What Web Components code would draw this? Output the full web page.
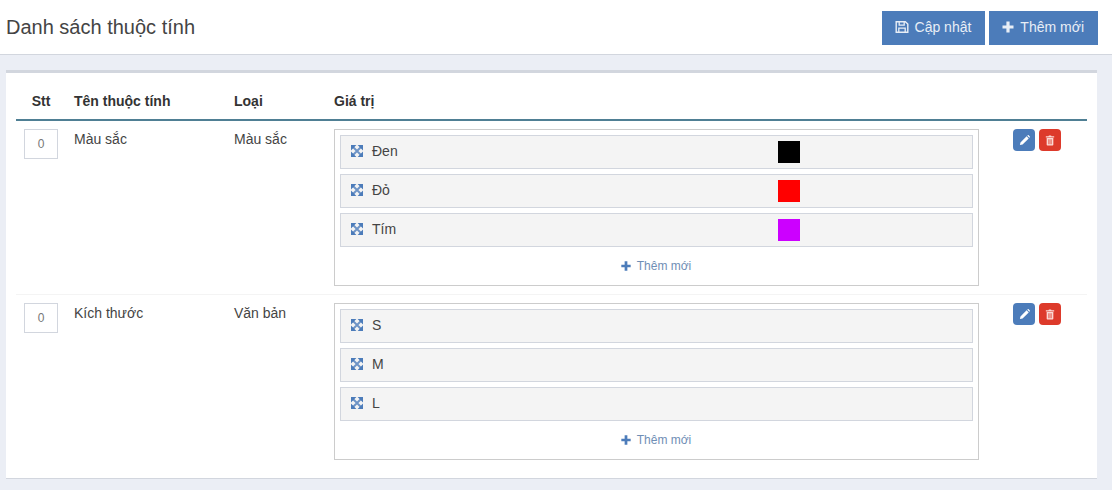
<!DOCTYPE html>
<html lang="vi"><head><meta charset="utf-8"><title>Danh sách thuộc tính</title>
<style>
html,body{margin:0;padding:0;height:490px;overflow:hidden;background:#ebeef5;font:14px/20px "Liberation Sans",Arial,sans-serif;color:#333}
</style></head><body>
<page-header title-text="Danh sách thuộc tính">
  <ui-button icon="save">Cập nhật</ui-button>
  <ui-button icon="plus">Thêm mới</ui-button>
</page-header>
<attr-panel>
  <attr-row name="Màu sắc" kind="Màu sắc">
    <value-item label="Đen" swatch="#000000"></value-item>
    <value-item label="Đỏ" swatch="#ff0000"></value-item>
    <value-item label="Tím" swatch="#cc00ff"></value-item>
  </attr-row>
  <attr-row name="Kích thước" kind="Văn bản">
    <value-item label="S"></value-item>
    <value-item label="M"></value-item>
    <value-item label="L"></value-item>
  </attr-row>
</attr-panel>
<script>
const ICONS={
 save:'<svg viewBox="0 0 14 14" width="14" height="14"><path fill="none" stroke="currentColor" stroke-width="1.4" d="M1.200 1.700h9.100l2.500 2.300v8.300H1.200z"/><path fill="none" stroke="currentColor" stroke-width="1.3" d="M4.200 2v3.200h5V2M3.800 12V8.200h6.400V12"/></svg>',
 plus:'<svg viewBox="0 0 12 12" width="12" height="12"><path fill="currentColor" d="M4.400 0.500h3.200v3.900h3.900v3.200H7.600v3.900H4.400V7.600H0.500V4.400h3.900z"/></svg>',
 move:'<svg viewBox="0 0 12 12" width="12" height="12"><path fill="currentColor" d="M0 0h5.400L0 5.400zM12 0v5.400L6.600 0zM12 12H6.600L12 6.600zM0 12V6.600L5.400 12z"/><path fill="none" stroke="currentColor" stroke-width="2" stroke-opacity=".8" d="M2 2l8 8M10 2l-8 8"/></svg>',
 pencil:'<svg viewBox="0 0 12 12" width="11" height="11"><path fill="currentColor" d="M8.300 1.400l2.300 2.300-6.700 6.700L1 11l.6-2.900zM9 .7l.6-.5c.3-.2.6-.2.9 0l1.300 1.300c.2.3.2.6 0 .9l-.5.6z"/></svg>',
 trash:'<svg viewBox="0 0 12 12" width="10" height="11"><path fill="currentColor" fill-rule="evenodd" d="M4.200 1l.5-1h2.600l.5 1H11v1.300H1V1zM2 3h8v7.800c0 .7-.5 1.200-1.200 1.200H3.200C2.500 12 2 11.500 2 10.800zM4.200 4.500v6h1.100v-6zM6.700 4.500v6h1.100v-6z"/></svg>'
};
function def(name,css,html){
  customElements.define(name,class extends HTMLElement{
    connectedCallback(){
      if(this.shadowRoot)return;
      const r=this.attachShadow({mode:'open'});
      r.innerHTML='<style>'+css+'</style>'+html(this);
    }
  });
}
def('ui-icon',':host{display:inline-flex;align-items:center;justify-content:center;line-height:0}',
  e=>ICONS[e.getAttribute('name')]);
def('ui-button',`:host{display:inline-flex;align-items:center;height:34px;padding:0 13px 2px 12px;background:#4c7cba;color:#e8eef6;border:1px solid #4c7cba;box-sizing:border-box;font-size:14px;gap:6px;cursor:pointer}`,
  e=>`<ui-icon name="${e.getAttribute('icon')}"></ui-icon><slot></slot>`);
def('page-header',`:host{display:flex;align-items:center;justify-content:space-between;height:55px;box-sizing:border-box;background:#fff;border-bottom:1px solid #d2d6de;padding:0 14px 0 6px}
  h1{margin:0;font-size:20px;font-weight:400;line-height:24px;color:#444}
  .a{display:flex;gap:4px;margin-top:1px}`,
  e=>`<h1>${e.getAttribute('title-text')}</h1><div class="a"><slot></slot></div>`);
def('attr-panel',`:host{display:block;margin:15px 15px 0 6px;background:#fff;border-top:3px solid #d2d6de;border-bottom:1px solid #d2d6de;padding:0 10px;height:405px;box-sizing:content-box}
  .h{display:grid;grid-template-columns:50px 160px 100px 1fr;height:36px;padding-top:10px;border-bottom:2px solid #4f7f94;font-weight:700;align-items:center}
  .h span{padding-left:8px}.h span:first-child{padding:0;text-align:center}`,
  ()=>`<div class="h"><span>Stt</span><span>Tên thuộc tính</span><span>Loại</span><span>Giá trị</span></div><slot></slot>`);
def('attr-row',`:host{display:grid;grid-template-columns:50px 160px 100px 661px 100px;border-bottom:1px solid #f4f4f4;box-sizing:border-box}
  :host(:last-child){border-bottom:0}
  .c{padding:8px;min-width:0}
  .n{color:#444}
  .i{display:block;width:34px;height:30px;box-sizing:border-box;border:1px solid #d2d6de;text-align:center;line-height:28px;font-size:12px;color:#777;background:#fff}
  .b{box-sizing:border-box;width:645px;border:1px solid #ccc;padding:5px 5px 0;display:flex;flex-direction:column;gap:5px}
  .add{display:flex;align-items:center;justify-content:center;height:38px;padding:0 2px 1px 0;box-sizing:border-box;margin-top:-5px;font-size:12px;color:#6f8eb5;gap:5px}
  .add ui-icon{color:#4c7cba;transform:scale(.85)}
  .acts{display:flex;gap:4px;padding:8px 0 0 26px;align-items:flex-start}
  .btn{width:22px;height:22px;border-radius:4px;display:flex;align-items:center;justify-content:center;color:#fff;box-sizing:border-box}
  .e{background:#4c7cba}.d{background:#dd3a2b;color:#fbd9d5}`,
  e=>`<div class="c"><span class="i">0</span></div>
  <div class="c n">${e.getAttribute('name')}</div>
  <div class="c n">${e.getAttribute('kind')}</div>
  <div class="c"><div class="b"><slot></slot><div class="add"><ui-icon name="plus"></ui-icon><span>Thêm mới</span></div></div></div>
  <div class="acts"><span class="btn e"><ui-icon name="pencil"></ui-icon></span><span class="btn d"><ui-icon name="trash"></ui-icon></span></div>`);
def('value-item',`:host{display:grid;grid-template-columns:31px 406px 1fr;height:34px;box-sizing:border-box;background:#f4f4f4;border:1px solid #d2d6de;align-items:start;color:#444}
  ui-icon{color:#4c7cba;margin:8px 0 0 10px;width:14px;height:14px;justify-content:flex-start}
  .t{margin-top:5px}
  .s{width:22px;height:22px;margin-top:5px}`,
  e=>{const s=e.getAttribute('swatch');return `<ui-icon name="move"></ui-icon><span class="t">${e.getAttribute('label')}</span>${s?`<span class="s" style="background:${s}"></span>`:''}`});
</script>
</body></html>
